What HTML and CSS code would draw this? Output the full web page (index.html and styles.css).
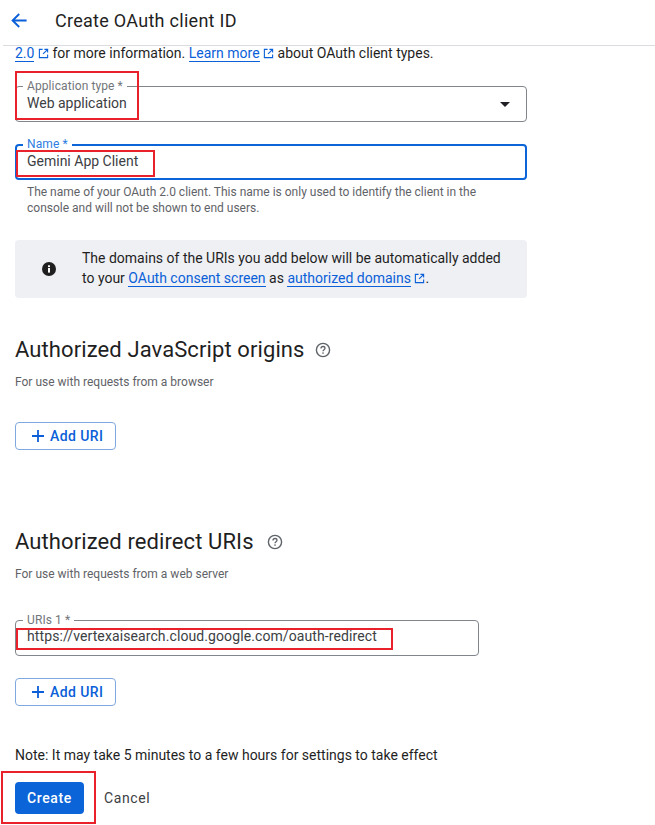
FILE: index.html
```html
<!DOCTYPE html>
<html lang="en">
<head>
<meta charset="utf-8">
<title>Create OAuth client ID</title>
<link rel="stylesheet" href="styles.css">
</head>
<body>
<header class="topbar">
  <svg class="back" viewBox="0 0 16 15" width="16" height="15"><path d="M15.6 7.5H2M8.2 1 1.6 7.5l6.6 6.5" fill="none" stroke="#0b5fd8" stroke-width="1.9"/></svg>
  <h1 class="title">Create OAuth client ID</h1>
</header>
<main class="page">
  <p class="intro"><a class="link">2.0</a><svg class="ext" viewBox="0 0 12 12" width="11" height="11"><path d="M5 1.5H1.5v9h9V7M7 1.5h3.5V5M10.3 1.7 5.5 6.5" fill="none" stroke="#0b5fd8" stroke-width="1.2"/></svg> for more information. <a class="link">Learn more</a><svg class="ext" viewBox="0 0 12 12" width="11" height="11"><path d="M5 1.5H1.5v9h9V7M7 1.5h3.5V5M10.3 1.7 5.5 6.5" fill="none" stroke="#0b5fd8" stroke-width="1.2"/></svg> about OAuth client types.</p>

  <div class="field field-select">
    <span class="label">Application type *</span>
    <span class="value">Web application</span>
    <span class="caret"></span>
    <span class="mark mark-type"></span>
  </div>

  <div class="field field-focus">
    <span class="label label-focus">Name *</span>
    <span class="value">Gemini App Client</span>
    <span class="mark mark-name"></span>
  </div>
  <p class="hint">The name of your OAuth 2.0 client. This name is only used to identify the client in the console and will not be shown to end users.</p>

  <div class="notice">
    <svg class="info" viewBox="0 0 14 14" width="14" height="14"><circle cx="7" cy="7" r="7" fill="#1f1f1f"/><rect x="6" y="6" width="2" height="4.6" fill="#fff"/><rect x="6" y="3.3" width="2" height="1.8" fill="#fff"/></svg>
    <div class="notice-text">
      <div>The domains of the URIs you add below will be automatically added</div>
      <div>to your <a class="link">OAuth consent screen</a> as <a class="link">authorized domains</a><svg class="ext" viewBox="0 0 12 12" width="11" height="11"><path d="M5 1.5H1.5v9h9V7M7 1.5h3.5V5M10.3 1.7 5.5 6.5" fill="none" stroke="#0b5fd8" stroke-width="1.2"/></svg>.</div>
    </div>
  </div>

  <section class="section section-origins">
    <h2 class="heading">Authorized JavaScript origins<svg class="help" viewBox="0 0 16 16" width="16" height="16"><circle cx="8" cy="8" r="6.6" fill="none" stroke="#5f6368" stroke-width="1.4"/><path d="M6 6.4c0-1.2.9-1.9 2-1.9s2 .8 2 1.8c0 1.4-2 1.5-2 3" fill="none" stroke="#5f6368" stroke-width="1.3"/><rect x="7.3" y="10.4" width="1.4" height="1.4" fill="#5f6368"/></svg></h2>
    <p class="sub">For use with requests from a browser</p>
    <button class="add"><svg viewBox="0 0 12 12" width="12" height="12"><path d="M6 0v12M0 6h12" stroke="#0b5fd8" stroke-width="1.8" fill="none"/></svg>Add URI</button>
  </section>

  <section class="section section-redirect">
    <h2 class="heading">Authorized redirect URIs<svg class="help" viewBox="0 0 16 16" width="16" height="16"><circle cx="8" cy="8" r="6.6" fill="none" stroke="#5f6368" stroke-width="1.4"/><path d="M6 6.4c0-1.2.9-1.9 2-1.9s2 .8 2 1.8c0 1.4-2 1.5-2 3" fill="none" stroke="#5f6368" stroke-width="1.3"/><rect x="7.3" y="10.4" width="1.4" height="1.4" fill="#5f6368"/></svg></h2>
    <p class="sub">For use with requests from a web server</p>
    <div class="field field-uri">
      <span class="label">URIs 1 *</span>
      <span class="value value-uri">https://vertexaisearch.cloud.google.com/oauth-redirect</span>
      <span class="mark mark-uri"></span>
    </div>
    <button class="add add-redirect"><svg viewBox="0 0 12 12" width="12" height="12"><path d="M6 0v12M0 6h12" stroke="#0b5fd8" stroke-width="1.8" fill="none"/></svg>Add URI</button>
  </section>

  <p class="note">Note: It may take 5 minutes to a few hours for settings to take effect</p>
  <div class="actions">
    <button class="create">Create</button>
    <button class="cancel">Cancel</button>
    <span class="mark mark-create"></span>
  </div>
</main>
</body>
</html>
```
FILE: styles.css
```css
* { box-sizing: border-box; }
html, body { margin: 0; padding: 0; }
body {
  width: 655px;
  height: 825px;
  overflow: hidden;
  background: #fff;
  color: #1f1f1f;
  font-family: Roboto, "Liberation Sans", sans-serif;
  font-size: 14px;
}
.topbar {
  height: 46px;
  margin-left: 3px;
  padding-left: 8px;
  display: flex;
  align-items: center;
  border-bottom: 1px solid #dadce0;
}
.back { flex: none; margin-top: -4px; }
.title {
  margin: -4px 0 0 28px;
  font-size: 18px;
  font-weight: 400;
  line-height: 24px;
  letter-spacing: 0.28px;
}
.page { padding: 0 0 0 15px; width: 527px; }
.intro { margin: -1px 0 0; height: 41px; line-height: 16px; white-space: nowrap; }
.link { color: #0b5fd8; border-bottom: 1px solid #0b5fd8; }
.ext { margin-left: 3.5px; vertical-align: -1px; }
.field {
  position: relative;
  height: 36px;
  border: 1px solid #80868b;
  border-radius: 4px;
  padding: 8px 11px 0;
}
.label {
  position: absolute;
  left: 7px;
  top: -8px;
  padding: 0 4px;
  background: #fff;
  font-size: 12px;
  line-height: 14px;
  letter-spacing: 0.1px;
  color: #72767a;
}
.value { display: block; line-height: 16px; color: #3c4043; }
.value-uri { letter-spacing: 0.1px; }
.caret {
  position: absolute;
  right: 16px;
  top: 15px;
  border-left: 5px solid transparent;
  border-right: 5px solid transparent;
  border-top: 5px solid #202124;
}
.field-focus {
  margin-top: 22px;
  border: 2px solid #0b64d8;
  padding: 7px 10px 0;
}
.label-focus { color: #2f7de1; left: 6px; top: -9px; }
.hint {
  margin: 4px 0 0;
  padding: 0 12px;
  font-size: 12px;
  line-height: 16px;
  color: #5f6368;
}
.notice {
  margin-top: 24px;
  height: 58px;
  background: #eef0f4;
  border-radius: 4px;
  display: flex;
  align-items: center;
  padding: 0 16px 2px 27px;
}
.info { flex: none; margin: 2px 26px 0 0; }
.notice-text { line-height: 20px; white-space: nowrap; }
.section-origins { margin-top: 38px; }
.section-redirect { margin-top: 78px; }
.heading {
  margin: 0;
  display: flex;
  align-items: center;
  font-size: 22px;
  font-weight: 400;
  line-height: 28px;
  letter-spacing: 0.1px;
  white-space: nowrap;
}
.help { margin-left: 10px; }
.section-redirect .help { margin-left: 13px; }
.sub { margin: 10px 0 0; font-size: 12px; line-height: 16px; color: #5f6368; }
.add {
  display: flex;
  align-items: center;
  gap: 6px;
  width: 101px;
  height: 28px;
  margin-top: 32px;
  padding: 0 0 0 16px;
  background: #fff;
  border: 1px solid #7fa8e0;
  border-radius: 4px;
  color: #0b5fd8;
  font-family: inherit;
  font-size: 14px;
  font-weight: 500;
  letter-spacing: 0.4px;
}
.section-redirect .field { margin-top: 38px; width: 464px; padding-top: 7px; }
.add-redirect { margin-top: 22px; }
.note { margin: 39px 0 0; line-height: 20px; white-space: nowrap; }
.actions { position: relative; display: flex; align-items: center; gap: 20px; margin-top: 17px; }
.create {
  width: 69px;
  height: 32px;
  border: 0;
  border-radius: 4px;
  background: #0b64d8;
  color: #fff;
  font-family: inherit;
  font-size: 14px;
  font-weight: 500;
  letter-spacing: 0.6px;
}
.cancel {
  border: 0;
  padding: 0;
  background: none;
  color: #3c4043;
  font-family: inherit;
  font-size: 14px;
  font-weight: 400;
  letter-spacing: 0.6px;
}
.mark { position: absolute; border: 2px solid #e8212a; pointer-events: none; }
.mark-type { left: -1px; top: -16px; width: 124px; height: 49px; }
.mark-name { left: -1px; top: 4px; width: 139px; height: 27px; }
.mark-uri { left: 0; top: 7px; width: 377px; height: 22px; }
.mark-create { left: -14px; top: -11px; width: 95px; height: 53px; }
```
